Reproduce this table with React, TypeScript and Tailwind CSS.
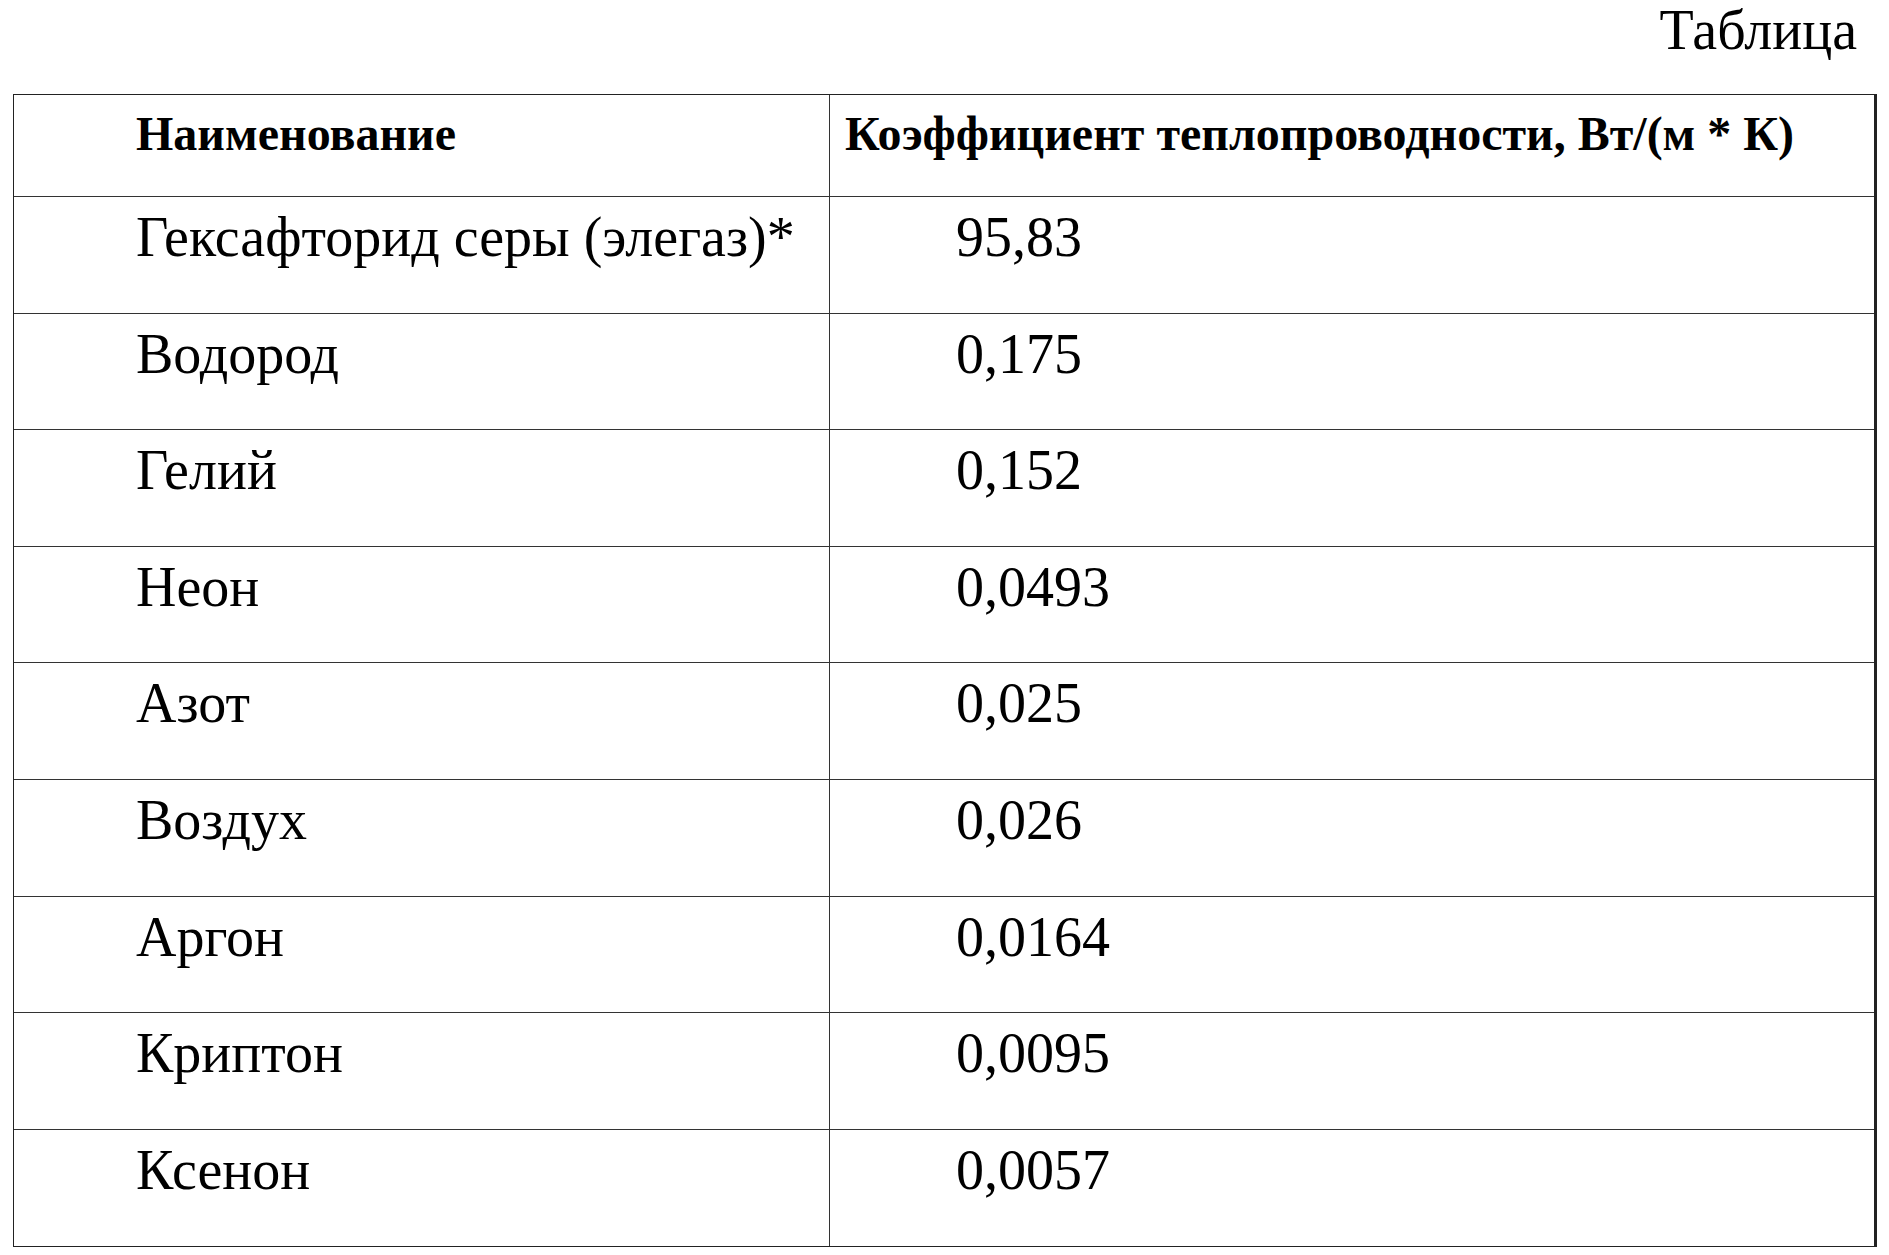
import React from "react";

const rows: [string, string][] = [
  ["Гексафторид серы (элегаз)*", "95,83"],
  ["Водород", "0,175"],
  ["Гелий", "0,152"],
  ["Неон", "0,0493"],
  ["Азот", "0,025"],
  ["Воздух", "0,026"],
  ["Аргон", "0,0164"],
  ["Криптон", "0,0095"],
  ["Ксенон", "0,0057"],
];

export default function App() {
  return (
    <div
      className="w-[1889px] h-[1255px] bg-white text-black overflow-hidden"
      style={{ fontFamily: '"Liberation Serif", "Times New Roman", serif' }}
    >
      <div className="flex justify-end pr-[32px] h-[94px]">
        <div className="text-[56px] leading-[60px]">Таблица</div>
      </div>
      <div className="ml-[13px] w-[1864px] border border-r-[3px] border-[#222] grid grid-cols-[816px_1fr]">
        <div className="h-[102px] border-r border-b border-[#333] pl-[122px] pt-[11px] text-[48px] leading-[56px] font-bold">
          Наименование
        </div>
        <div className="h-[102px] border-b border-[#333] pl-[15px] pt-[11px] text-[48px] leading-[56px] font-bold whitespace-nowrap">
          Коэффициент теплопроводности, Вт/(м * К)
        </div>
        {rows.map(([name, val], i) => (
          <React.Fragment key={name}>
            <div
              className={`h-[116.6px] border-r border-[#333] pl-[122px] pt-[9px] text-[56px] leading-[62px] whitespace-nowrap ${
                i < rows.length - 1 ? "border-b" : ""
              }`}
            >
              {name}
            </div>
            <div
              className={`h-[116.6px] border-[#333] pl-[126px] pt-[9px] text-[56px] leading-[62px] ${
                i < rows.length - 1 ? "border-b" : ""
              }`}
            >
              {val}
            </div>
          </React.Fragment>
        ))}
      </div>
    </div>
  );
}
